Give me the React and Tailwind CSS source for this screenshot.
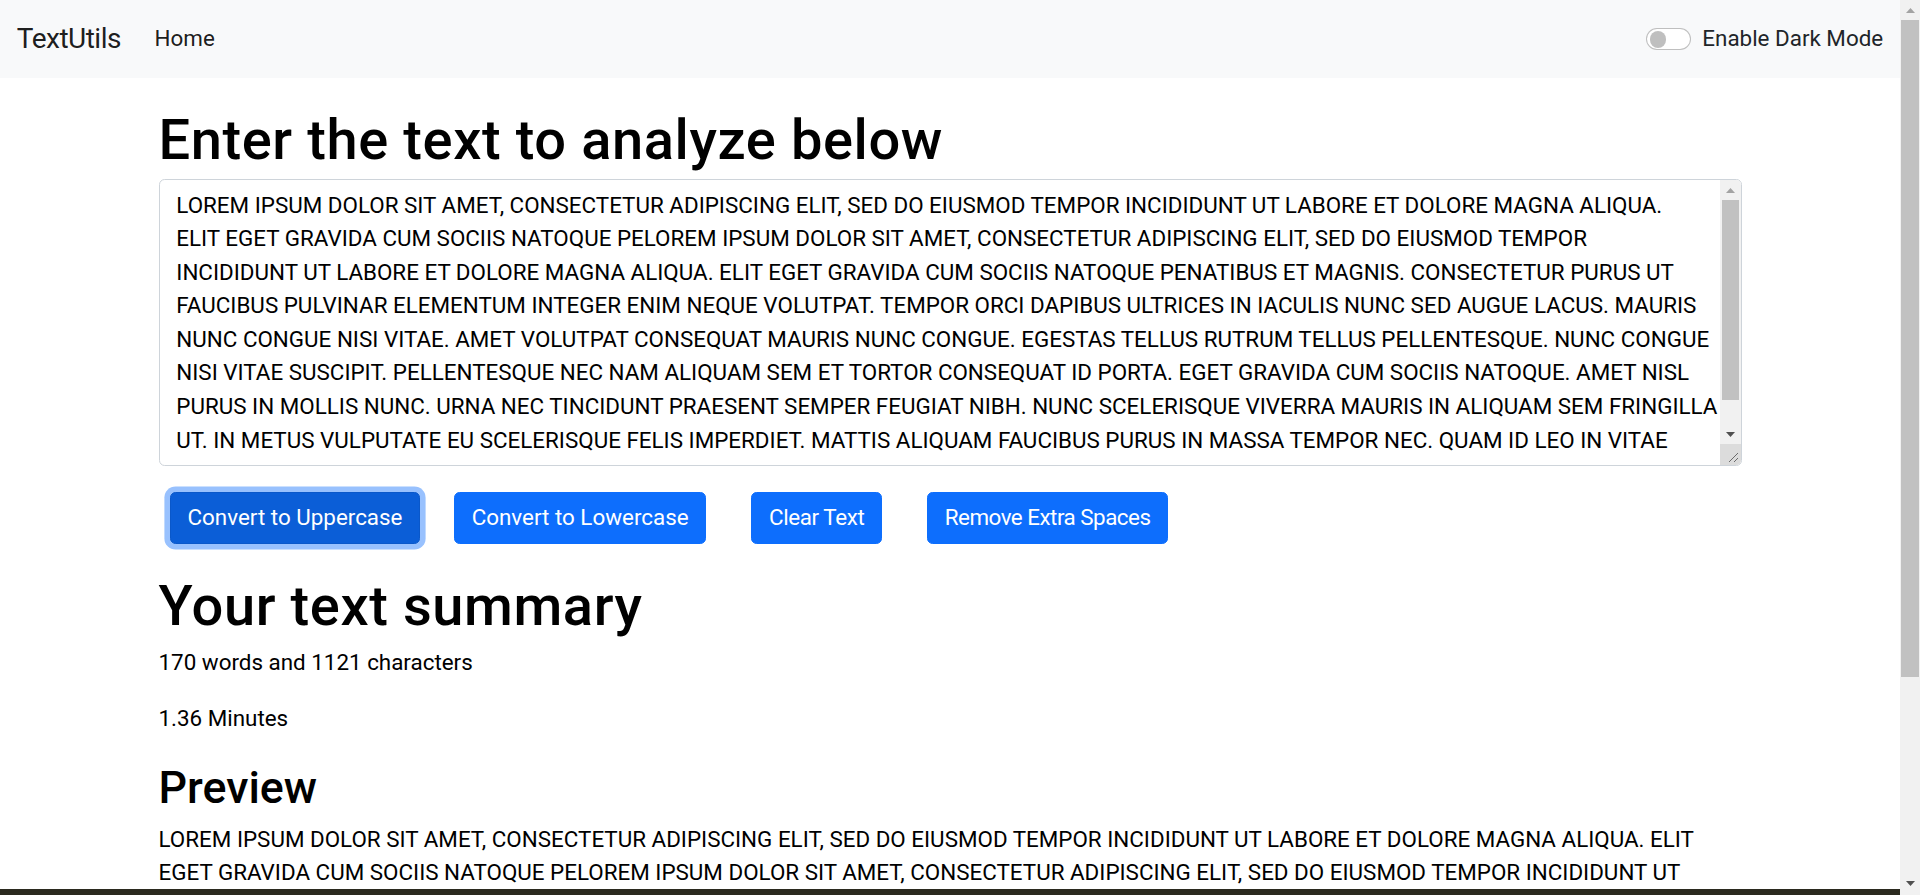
const LINES = [
  'LOREM IPSUM DOLOR SIT AMET, CONSECTETUR ADIPISCING ELIT, SED DO EIUSMOD TEMPOR INCIDIDUNT UT LABORE ET DOLORE MAGNA ALIQUA.',
  'ELIT EGET GRAVIDA CUM SOCIIS NATOQUE PELOREM IPSUM DOLOR SIT AMET, CONSECTETUR ADIPISCING ELIT, SED DO EIUSMOD TEMPOR',
  'INCIDIDUNT UT LABORE ET DOLORE MAGNA ALIQUA. ELIT EGET GRAVIDA CUM SOCIIS NATOQUE PENATIBUS ET MAGNIS. CONSECTETUR PURUS UT',
  'FAUCIBUS PULVINAR ELEMENTUM INTEGER ENIM NEQUE VOLUTPAT. TEMPOR ORCI DAPIBUS ULTRICES IN IACULIS NUNC SED AUGUE LACUS. MAURIS',
  'NUNC CONGUE NISI VITAE. AMET VOLUTPAT CONSEQUAT MAURIS NUNC CONGUE. EGESTAS TELLUS RUTRUM TELLUS PELLENTESQUE. NUNC CONGUE',
  'NISI VITAE SUSCIPIT. PELLENTESQUE NEC NAM ALIQUAM SEM ET TORTOR CONSEQUAT ID PORTA. EGET GRAVIDA CUM SOCIIS NATOQUE. AMET NISL',
  'PURUS IN MOLLIS NUNC. URNA NEC TINCIDUNT PRAESENT SEMPER FEUGIAT NIBH. NUNC SCELERISQUE VIVERRA MAURIS IN ALIQUAM SEM FRINGILLA',
  'UT. IN METUS VULPUTATE EU SCELERISQUE FELIS IMPERDIET. MATTIS ALIQUAM FAUCIBUS PURUS IN MASSA TEMPOR NEC. QUAM ID LEO IN VITAE',
  'TURPIS MASSA SED ELEMENTUM TEMPUS EGESTAS SED SED RISUS PRETIUM. ARCU CURSUS VITAE CONGUE MAURIS RHONCUS AENEAN VEL ELIT.',
]

const TEXT = LINES.join(' ')

// preview wraps wider than the textarea; first two lines are what shows on screen
const PREVIEW_1 = LINES[0] + ' ELIT'
const PREVIEW_2 =
  'EGET GRAVIDA CUM SOCIIS NATOQUE PELOREM IPSUM DOLOR SIT AMET, CONSECTETUR ADIPISCING ELIT, SED DO EIUSMOD TEMPOR INCIDIDUNT UT'
const PREVIEW_REST = TEXT.slice(PREVIEW_1.length + PREVIEW_2.length + 2)

function Arrow({ up, dark }) {
  return (
    <svg width="9" height="5" viewBox="0 0 9 5" className="block">
      <polygon points={up ? '0,5 4.5,0 9,5' : '0,0 4.5,5 9,0'} fill={dark ? '#505050' : '#a3a3a3'} />
    </svg>
  )
}

function Navbar() {
  return (
    <nav className="flex items-center justify-between bg-[#f8f9fa] px-[16.8px] py-[11.2px]">
      <div className="flex items-center">
        <a href="#" className="mr-[22.4px] py-[4.4px] text-[28px] leading-[42px] tracking-[-0.5px] text-black/90">
          TextUtils
        </a>
        <a href="#" className="px-[11.2px] py-[11.2px] text-[22.4px] leading-[33.6px] text-black/90">
          Home
        </a>
      </div>
      <label className="flex items-center text-[22.4px] leading-[33.6px] text-[#212529]">
        <span className="flex h-[22.4px] w-[44.8px] items-center rounded-full border border-black/25 bg-white px-[2.3px]">
          <span className="h-[16.8px] w-[16.8px] rounded-full bg-black/25" />
        </span>
        <span className="ml-[11.2px]">Enable Dark Mode</span>
      </label>
    </nav>
  )
}

function Button({ children, active, className = '' }) {
  return (
    <button
      type="button"
      className={
        'rounded-[5.6px] border px-[16.8px] py-[8.4px] text-[22.4px] leading-[33.6px] text-white ' +
        (active
          ? 'border-[#0a58ca] bg-[#0b5ed7] ring-[5.6px] ring-[#98c1fe] '
          : 'border-[#0d6efd] bg-[#0d6efd] ') +
        className
      }
    >
      {children}
    </button>
  )
}

function TextBox() {
  return (
    <div className="relative mb-[25.8px]">
      <textarea
        wrap="off"
        defaultValue={LINES.join('\n')}
        className="block h-[287px] w-full resize-none overflow-hidden whitespace-pre rounded-[5.6px] border border-[#ced4da] bg-white py-[8.4px] pl-[16.8px] pr-[36px] text-[22.4px] leading-[33.6px] text-black outline-none"
      />
      {/* textarea scrollbar + resize corner */}
      <div className="absolute bottom-[1px] right-[1px] top-[1px] flex w-[21px] flex-col rounded-r-[4.6px] bg-[#f1f1f1]">
        <div className="flex h-[20px] items-center justify-center">
          <Arrow up />
        </div>
        <div className="mx-[2px] h-[200px] bg-[#c1c1c1]" />
        <div className="flex-1" />
        <div className="flex h-[20px] items-center justify-center">
          <Arrow dark />
        </div>
        <div className="flex h-[21px] items-end justify-end rounded-br-[4.6px] bg-[#dcdcdc] p-[2px]">
          <svg width="12" height="12" viewBox="0 0 12 12">
            <line x1="11" y1="2" x2="2" y2="11" stroke="#6b6b6b" strokeWidth="1" />
            <line x1="11" y1="7" x2="7" y2="11" stroke="#6b6b6b" strokeWidth="1" />
          </svg>
        </div>
      </div>
    </div>
  )
}

function PageScrollbar() {
  return (
    <aside className="sticky top-0 flex h-screen w-[20px] shrink-0 flex-col bg-[#f1f1f1]">
      <div className="flex h-[20px] items-center justify-center">
        <Arrow up />
      </div>
      <div className="mx-[1px] h-[657px] bg-[#c1c1c1]" />
      <div className="flex-1" />
      <div className="flex h-[20px] items-center justify-center pb-[4px]">
        <Arrow dark />
      </div>
    </aside>
  )
}

export default function App() {
  return (
    <div className="flex bg-white font-['Roboto',sans-serif] text-[22.4px] leading-[1.5] text-black">
      <div className="relative min-w-0 flex-1">
        <Navbar />

        <div className="mx-auto my-[22.4px] w-[1583px]">
          <h1 className="mb-[5.2px] pt-[6px] text-[56px] font-medium leading-[1.2] tracking-[0.6px]">
            Enter the text to analyze below
          </h1>
          <TextBox />
          <div className="flex items-center">
            <Button active className="mx-[11.2px]">Convert to Uppercase</Button>
            <Button className="mx-[22.4px]">Convert to Lowercase</Button>
            <Button className="mx-[22.4px] tracking-[-0.4px]">Clear Text</Button>
            <Button className="mx-[22.4px] tracking-[-0.5px]">Remove Extra Spaces</Button>
          </div>
        </div>

        <div className="mx-auto mb-[22.4px] mt-[23px] w-[1583px]">
          <h1 className="mb-[5.2px] pt-[6px] text-[56px] font-medium leading-[1.2] tracking-[0.6px]">
            Your text summary
          </h1>
          <p className="mb-[22.4px]">170 words and 1121 characters</p>
          <p className="mb-[22.4px]">1.36 Minutes</p>
          <h2 className="mb-[8.2px] pt-[3px] text-[44.8px] font-medium leading-[1.2]">Preview</h2>
          <p className="mb-[22.4px]">
            <span className="block whitespace-nowrap">{PREVIEW_1}</span>
            <span className="block whitespace-nowrap">{PREVIEW_2}</span>
            {PREVIEW_REST}
          </p>
        </div>

        {/* dark strip along the bottom edge of the window */}
        <div className="fixed bottom-0 left-0 right-[20px] h-[6px] bg-[#2b2a1f]" />
      </div>
      <PageScrollbar />
    </div>
  )
}
